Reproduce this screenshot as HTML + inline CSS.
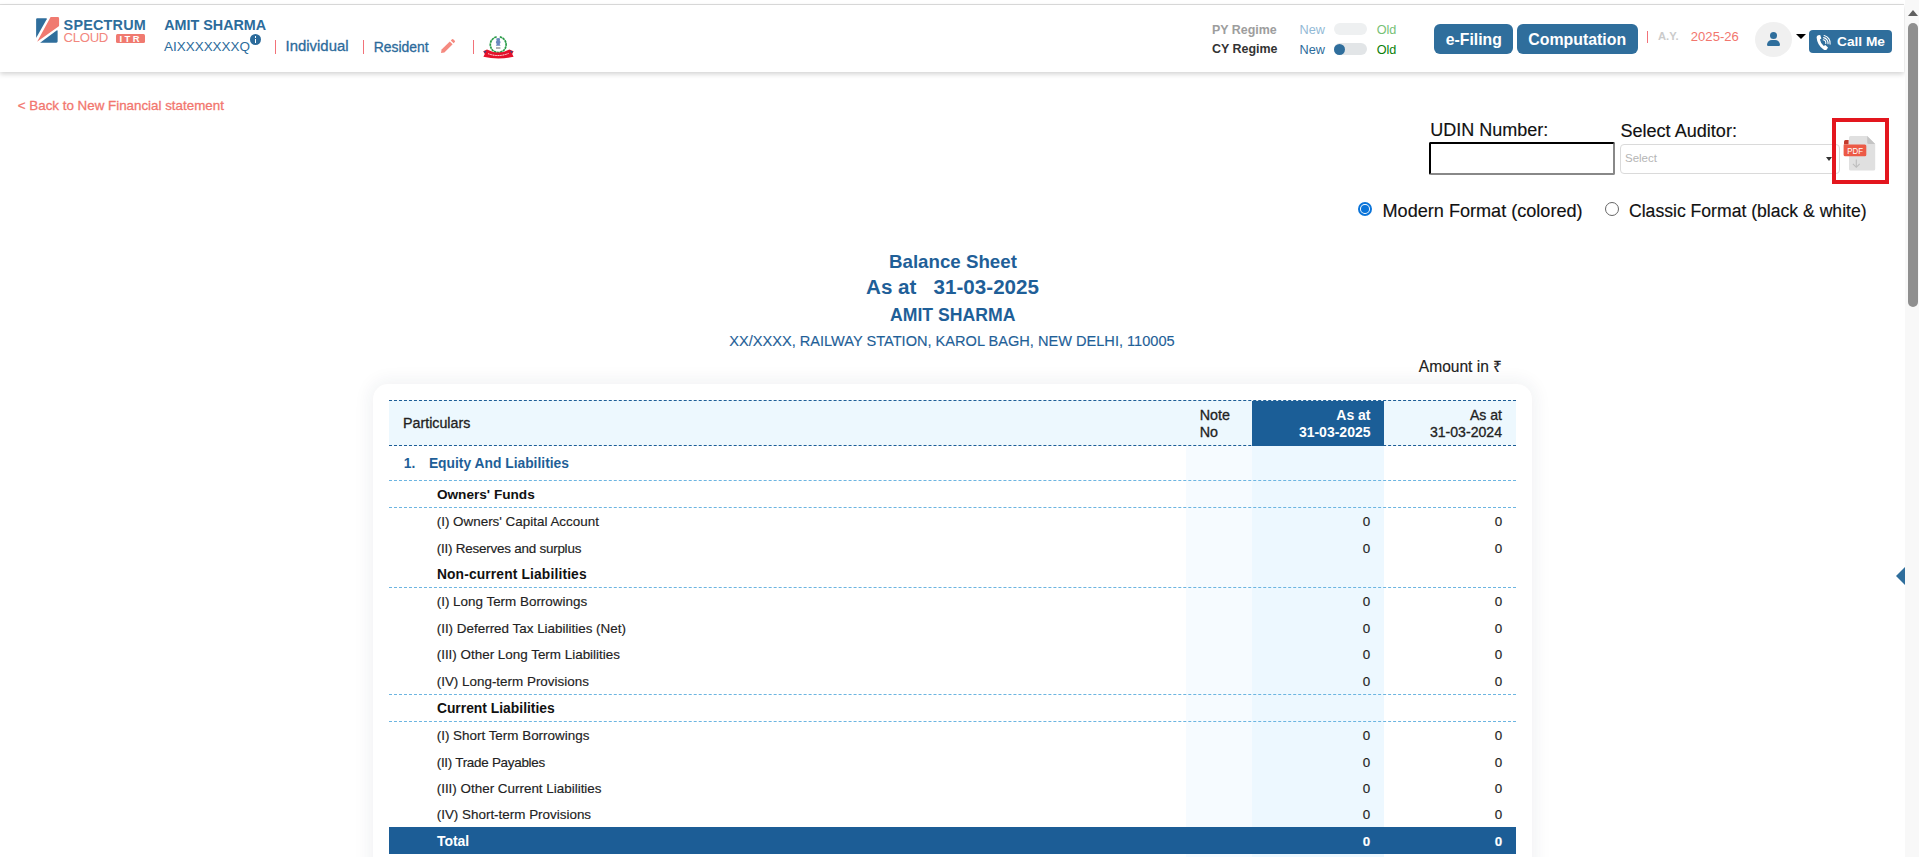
<!DOCTYPE html>
<html><head><meta charset="utf-8">
<style>
html,body{margin:0;padding:0;}
body{width:1919px;height:857px;overflow:hidden;position:relative;background:#fff;font-family:"Liberation Sans",sans-serif;}
.a{position:absolute;}
.t{position:absolute;white-space:nowrap;line-height:1;}
.b{font-weight:bold;}
.sb{-webkit-text-stroke:0.3px currentColor;}
.rg{-webkit-text-stroke:0.15px currentColor;}
.hb{color:#2c6b9b;}
.sal{color:#f2766e;}
#topline{left:0;top:4px;width:1904px;height:1px;background:#dedede;}
#hdr{left:0;top:5px;width:1904px;height:67px;background:#fff;box-shadow:0 2px 5px rgba(0,0,0,0.18);}
.sep{position:absolute;width:1.1px;background:#f27279;}
.btn{position:absolute;background:#2f6e9c;border-radius:6px;}
#sb{left:1905px;top:0;width:14px;height:857px;background:#f8f8f8;}
#thumb{left:1907.5px;top:23px;width:10px;height:284px;background:#8f8f8f;border-radius:5px;}
#card{left:373px;top:384px;width:1159px;height:520px;background:#fff;border-radius:15px;box-shadow:0 0 18px 3px rgba(30,45,80,0.065);}
.dk{position:absolute;left:389px;width:1127px;height:0;border-top:1px dashed #1c5d96;}
.lt{position:absolute;left:389px;width:1127px;height:0;border-top:1px dashed #6cb5e1;}
.row{position:absolute;font-size:13.43px;color:#1e1e1e;}
.z{-webkit-text-stroke:0.15px currentColor;position:absolute;white-space:nowrap;line-height:1;font-size:13.4px;color:#1e1e1e;text-align:right;}
</style></head><body>
<div id="topline" class="a"></div>
<div id="hdr" class="a"></div>

<!-- logo -->
<svg class="a" style="left:35px;top:16px" width="25" height="28" viewBox="35 16 25 28">
  <path d="M37.2 18.3 H46.3 Q47.1 18.4 46.7 19.2 L36.1 37.9 V19.4 Q36.1 18.3 37.2 18.3 Z" fill="#2f6e9c"/>
  <path d="M50.6 17.1 H57.8 Q59.1 17.1 59.1 18.4 V25.6 Q59.1 26.2 58.5 26.6 L37.1 41.7 Z" fill="#f07a70"/>
  <path d="M56.6 30.4 Q57.6 29.9 57.6 31 V41.6 Q57.6 42.7 56.4 42.7 H40.1 Z" fill="#2f6e9c"/>
</svg>
<div class="t b" style="left:63.6px;top:18.1px;font-size:14.4px;color:#2f6e9c;letter-spacing:0.2px">SPECTRUM</div>
<div class="t" style="left:63.6px;top:31.3px;font-size:13.2px;color:#f2877e;letter-spacing:-0.35px">CLOUD</div>
<div class="a" style="left:116px;top:33.6px;width:28.6px;height:9.2px;background:#f07a70;border-radius:1.5px"></div>
<div class="t b" style="left:119.5px;top:34.2px;font-size:9.4px;color:#fff;letter-spacing:2.4px">ITR</div>

<div class="t b hb" style="left:164.2px;top:17.85px;font-size:14.35px">AMIT SHARMA</div>
<div class="t hb" style="left:164px;top:39.6px;font-size:13.46px">AIXXXXXXXQ</div>
<div class="a" style="left:250px;top:34px;width:11px;height:11px;border-radius:50%;background:#2c6b9b"></div>
<div class="a" style="left:254.7px;top:36.2px;width:1.7px;height:1.6px;background:#fff"></div>
<div class="a" style="left:254.7px;top:38.6px;width:1.7px;height:4px;background:#fff"></div>
<div class="sep" style="left:274.8px;top:40px;height:14px"></div>
<div class="t hb sb" style="left:285.6px;top:38.9px;font-size:14.9px">Individual</div>
<div class="sep" style="left:362.9px;top:40px;height:14px"></div>
<div class="t hb sb" style="left:373.7px;top:41.0px;font-size:13.94px">Resident</div>
<svg class="a" style="left:440px;top:38px" width="16" height="16" viewBox="0 0 16 16">
  <path d="M1 15 L1.6 11.6 L9.8 3.4 L12.6 6.2 L4.4 14.4 Z" fill="#f58a80"/>
  <path d="M10.8 2.4 L12 1.2 Q12.6 0.6 13.2 1.2 L14.8 2.8 Q15.4 3.4 14.8 4 L13.6 5.2 Z" fill="#f58a80"/>
</svg>
<div class="sep" style="left:472.9px;top:40px;height:14px"></div>
<svg class="a" style="left:482px;top:36px" width="33" height="23" viewBox="0 0 33 23">
  <path d="M14.6 0.9 A7.9 7.9 0 1 0 17.8 0.9" fill="none" stroke="#2a9b48" stroke-width="1.7" stroke-dasharray="2.6 0.5"/>
  <path d="M14.2 2.6 Q16.2 1.6 18.2 2.6 L17.8 4.8 Q18.9 5.6 18.4 7 L17.6 8 L18.6 9.8 L13.8 9.8 L14.8 8 L14 7 Q13.5 5.6 14.6 4.8 Z" fill="#6a88bf"/>
  <path d="M14 12 H18.4" stroke="#444" stroke-width="0.8"/>
  <path d="M1.2 15.2 L5 13.6 Q16.2 19.6 27.4 13.4 L31.6 15.2 L30.2 18 L31.6 20.8 Q16.2 24.2 1.4 20.8 L2.8 18 Z" fill="#e5102a"/>
  <path d="M3 17.2 L1.8 15.6 L4.6 14.6 Z M29.6 17.2 L30.8 15.6 L28 14.6 Z" fill="#2a4f8f"/>
  <path d="M6 17.6 Q16.2 21.6 26.6 17.4" fill="none" stroke="#fff" stroke-width="1" stroke-dasharray="1.2 0.5"/>
</svg>

<!-- regime -->
<div class="t b" style="left:1212px;top:23.6px;font-size:12.44px;color:#9d9d9d">PY Regime</div>
<div class="t b" style="left:1212px;top:43.3px;font-size:12.44px;color:#333">CY Regime</div>
<div class="t" style="left:1299.6px;top:24.1px;font-size:12.7px;color:#93bad6">New</div>
<div class="t" style="left:1299.6px;top:43.7px;font-size:12.7px;color:#2c6b9b">New</div>
<div class="a" style="left:1334px;top:23px;width:33px;height:12px;border-radius:6px;background:#eef0f1"></div>
<div class="a" style="left:1334px;top:43px;width:33px;height:12px;border-radius:6px;background:#e2e5e7"></div>
<div class="a" style="left:1334px;top:43.5px;width:11px;height:11px;border-radius:50%;background:#2f6e9c"></div>
<div class="t" style="left:1376.7px;top:24.1px;font-size:12.66px;color:#77c177">Old</div>
<div class="t" style="left:1376.7px;top:43.7px;font-size:12.66px;color:#0a800a">Old</div>

<div class="btn" style="left:1434px;top:24px;width:79px;height:30px"></div>
<div class="t b" style="left:1445.8px;top:31.7px;font-size:15.75px;color:#fff">e-Filing</div>
<div class="btn" style="left:1517px;top:24px;width:121px;height:30px"></div>
<div class="t b" style="left:1528.3px;top:31.55px;font-size:15.89px;color:#fff">Computation</div>
<div class="sep" style="left:1647.4px;top:30.5px;height:12px"></div>
<div class="t b" style="left:1658px;top:31px;font-size:11.2px;color:#cbcbcb">A.Y.</div>
<div class="t sal" style="left:1690.8px;top:29.7px;font-size:13.1px">2025-26</div>

<div class="a" style="left:1755px;top:22px;width:37px;height:35px;border-radius:50%;background:#f0f0f0"></div>
<div class="a" style="left:1770.2px;top:32px;width:7px;height:7px;border-radius:50%;background:#2f6e9c"></div>
<div class="a" style="left:1767px;top:40.2px;width:13.4px;height:5.6px;border-radius:6px 6px 1.5px 1.5px;background:#2f6e9c"></div>
<div class="a" style="left:1796px;top:34px;width:0;height:0;border-left:5px solid transparent;border-right:5px solid transparent;border-top:5.2px solid #000"></div>
<div class="btn" style="left:1809px;top:30px;width:83px;height:23px;border-radius:4px"></div>
<svg class="a" style="left:1815px;top:34px" width="17" height="17" viewBox="0 0 17 17">
  <path d="M3.2 1.2 L5.2 1 L6.4 4.6 L4.9 5.6 Q5.6 9.4 8.8 12 L10.3 11 L13 13.6 L11.8 15.6 Q10.3 16.6 8.6 15.6 Q2.2 11 1.6 3.4 Q1.6 1.8 3.2 1.2 Z" fill="#fff"/>
  <path d="M8.2 5.8 A3.3 3.3 0 0 1 10.8 9.5 M8.6 3.6 A5.5 5.5 0 0 1 13 9.8 M9.1 1.5 A7.7 7.7 0 0 1 15.1 10.1" fill="none" stroke="#fff" stroke-width="1.1" stroke-linecap="round"/>
</svg>
<div class="t b" style="left:1837px;top:35.2px;font-size:13.7px;color:#fff">Call Me</div>

<!-- scrollbar -->
<div id="sb" class="a"></div>
<div class="a" style="left:1907.5px;top:10px;width:0;height:0;border-left:5px solid transparent;border-right:5px solid transparent;border-bottom:6px solid #606060"></div>
<div id="thumb" class="a"></div>

<!-- back link -->
<div class="t sal sb" style="left:17.8px;top:98.5px;font-size:13.36px">&lt; Back to New Financial statement</div>

<!-- udin -->
<div class="t rg" style="left:1430.3px;top:120.9px;font-size:18px;color:#111">UDIN Number:</div>
<div class="a" style="left:1429px;top:142px;width:182px;height:29px;border:2px inset #767676;border-color:#111 #888 #888 #111;border-radius:2px"></div>
<div class="t rg" style="left:1620.4px;top:121.7px;font-size:18.08px;color:#111">Select Auditor:</div>
<div class="a" style="left:1620px;top:144px;width:218px;height:27.5px;border:1px solid #dadada;border-radius:4px"></div>
<div class="t" style="left:1625px;top:153px;font-size:11.5px;color:#b5b5b5">Select</div>
<div class="a" style="left:1826px;top:157px;width:0;height:0;border-left:3.5px solid transparent;border-right:3.5px solid transparent;border-top:4px solid #333"></div>
<div class="a" style="left:1831.6px;top:118.2px;width:49px;height:58px;border:4px solid #e3161e"></div>
<svg class="a" style="left:1843px;top:135px" width="34" height="37" viewBox="0 0 34 37">
  <path d="M7.5 1.1 H24.2 L32.2 9.1 V34 Q32.2 35.6 30.6 35.6 H7.6 Q6 35.6 6 34 V2.6 Q6 1.1 7.5 1.1 Z" fill="#e0e0e0"/>
  <path d="M24.2 1.1 V7.6 Q24.2 9.1 25.7 9.1 H32.2 Z" fill="#c4c4c4"/>
  <path d="M1 6.4 Q1 4.9 2.5 4.9 H5.6 V9.5 H1 Z" fill="#c23a2c"/>
  <path d="M0.6 9.5 H21.8 Q23.3 9.5 23.3 11 V19.7 Q23.3 21.2 21.8 21.2 H2.1 Q0.6 21.2 0.6 19.7 Z" fill="#ec5a46"/>
  <text x="4.2" y="18.8" font-family="Liberation Sans" font-size="9.6" fill="#fff" textLength="15.8" lengthAdjust="spacingAndGlyphs">PDF</text>
  <path d="M13.3 24.4 V32.2 M9.9 28.9 L13.3 32.3 L16.7 28.9" fill="none" stroke="#bdbdbd" stroke-width="1.1"/>
</svg>

<!-- radios -->
<div class="a" style="left:1358px;top:202px;width:10px;height:10px;border-radius:50%;border:2px solid #0a74d9;background:#fff"></div>
<div class="a" style="left:1361.2px;top:205.2px;width:7.6px;height:7.6px;border-radius:50%;background:#0a74d9"></div>
<div class="t rg" style="left:1382.5px;top:201.6px;font-size:18.1px;color:#111">Modern Format (colored)</div>
<div class="a" style="left:1605px;top:201.7px;width:12px;height:12px;border-radius:50%;border:1px solid #666;background:#fff"></div>
<div class="t rg" style="left:1629px;top:203.0px;font-size:17.6px;color:#111">Classic Format (black &amp; white)</div>

<!-- titles -->
<div class="t b" style="left:889px;top:252.85px;font-size:18.72px;color:#1f5f98">Balance Sheet</div>
<div class="t b" style="left:866px;top:277.15px;font-size:20.61px;color:#1f5f98;white-space:pre">As at   31-03-2025</div>
<div class="t b" style="left:890px;top:306.56px;font-size:17.65px;color:#1f5f98">AMIT SHARMA</div>
<div class="t rg" style="left:729.3px;top:333.9px;font-size:14.58px;color:#1f5f98">XX/XXXX, RAILWAY STATION, KAROL BAGH, NEW DELHI, 110005</div>
<div class="t rg" style="left:1418.8px;top:358.7px;font-size:15.57px;color:#222">Amount in ₹</div>

<!-- card -->
<div id="card" class="a"></div>
<!-- header bg -->
<div class="a" style="left:389px;top:400px;width:1127px;height:46px;background:#edf8fe"></div>
<div class="a" style="left:1252px;top:401px;width:132px;height:45px;background:#1b5e97"></div>
<div class="a" style="left:1186px;top:446px;width:66px;height:420px;background:#f6fbff"></div>
<div class="a" style="left:1252px;top:446px;width:132px;height:420px;background:#edf8ff"></div>
<div class="dk" style="top:400px"></div>
<div class="dk" style="top:445px"></div>
<div class="lt" style="top:480px"></div>
<div class="lt" style="top:507px"></div>
<div class="lt" style="top:587px"></div>
<div class="lt" style="top:694px"></div>
<div class="lt" style="top:721px"></div>
<div class="a" style="left:389px;top:827px;width:1127px;height:26.5px;background:#1c5d96"></div>

<div class="t sb" style="left:403px;top:415.6px;font-size:14.25px;color:#222">Particulars</div>
<div class="t sb" style="left:1199.7px;top:407.6px;font-size:14.3px;color:#222;line-height:16.7px;top:407.2px">Note<br>No</div>
<div class="t b" style="right:548.5px;top:407.2px;font-size:14px;color:#fff;line-height:16.7px;text-align:right">As at<br>31-03-2025</div>
<div class="t sb" style="right:417px;top:407.2px;font-size:14.1px;color:#222;line-height:16.7px;text-align:right">As at<br>31-03-2024</div>

<div class="t b" style="left:403.7px;top:457.2px;font-size:13.83px;color:#1f5f98">1.</div>
<div class="t b" style="left:428.9px;top:457.2px;font-size:13.83px;color:#1f5f98">Equity And Liabilities</div>
<div class="t b" style="left:436.9px;top:488.15px;font-size:13.64px;color:#111">Owners' Funds</div>
<div class="t rg" style="left:436.7px;top:515.3px;font-size:13.43px;color:#222">(I) Owners' Capital Account</div>
<div class="t rg" style="left:436.7px;top:542.4px;font-size:13.43px;color:#222;letter-spacing:-0.22px">(II) Reserves and surplus</div>
<div class="t b" style="left:436.9px;top:568.2px;font-size:13.8px;color:#111;letter-spacing:0.15px">Non-current Liabilities</div>
<div class="t rg" style="left:436.7px;top:594.9px;font-size:13.43px;color:#222">(I) Long Term Borrowings</div>
<div class="t rg" style="left:436.7px;top:621.9px;font-size:13.43px;color:#222">(II) Deferred Tax Liabilities (Net)</div>
<div class="t rg" style="left:436.7px;top:648.1px;font-size:13.43px;color:#222">(III) Other Long Term Liabilities</div>
<div class="t rg" style="left:436.7px;top:674.6px;font-size:13.43px;color:#222">(IV) Long-term Provisions</div>
<div class="t b" style="left:436.9px;top:702.0px;font-size:13.86px;color:#111">Current Liabilities</div>
<div class="t rg" style="left:436.7px;top:729.0px;font-size:13.43px;color:#222">(I) Short Term Borrowings</div>
<div class="t rg" style="left:436.7px;top:755.7px;font-size:13.43px;color:#222;letter-spacing:-0.27px">(II) Trade Payables</div>
<div class="t rg" style="left:436.7px;top:782.0px;font-size:13.43px;color:#222">(III) Other Current Liabilities</div>
<div class="t rg" style="left:436.7px;top:808.0px;font-size:13.43px;color:#222">(IV) Short-term Provisions</div>
<div class="t b" style="left:436.9px;top:834.5px;font-size:13.96px;color:#fff">Total</div>

<div class="z" style="right:548.7px;top:515.3px">0</div>
<div class="z" style="right:416.7px;top:515.3px">0</div>
<div class="z" style="right:548.7px;top:542.4px">0</div>
<div class="z" style="right:416.7px;top:542.4px">0</div>
<div class="z" style="right:548.7px;top:594.9px">0</div>
<div class="z" style="right:416.7px;top:594.9px">0</div>
<div class="z" style="right:548.7px;top:621.9px">0</div>
<div class="z" style="right:416.7px;top:621.9px">0</div>
<div class="z" style="right:548.7px;top:648.1px">0</div>
<div class="z" style="right:416.7px;top:648.1px">0</div>
<div class="z" style="right:548.7px;top:674.6px">0</div>
<div class="z" style="right:416.7px;top:674.6px">0</div>
<div class="z" style="right:548.7px;top:729.0px">0</div>
<div class="z" style="right:416.7px;top:729.0px">0</div>
<div class="z" style="right:548.7px;top:755.7px">0</div>
<div class="z" style="right:416.7px;top:755.7px">0</div>
<div class="z" style="right:548.7px;top:782.0px">0</div>
<div class="z" style="right:416.7px;top:782.0px">0</div>
<div class="z" style="right:548.7px;top:808.0px">0</div>
<div class="z" style="right:416.7px;top:808.0px">0</div>
<div class="z b" style="right:548.7px;top:834.5px;color:#fff">0</div>
<div class="z b" style="right:416.7px;top:834.5px;color:#fff">0</div>

<!-- side triangle -->
<div class="a" style="left:1896px;top:566.5px;width:0;height:0;border-top:9.3px solid transparent;border-bottom:9.3px solid transparent;border-right:9px solid #2f6e9c"></div>
</body></html>
